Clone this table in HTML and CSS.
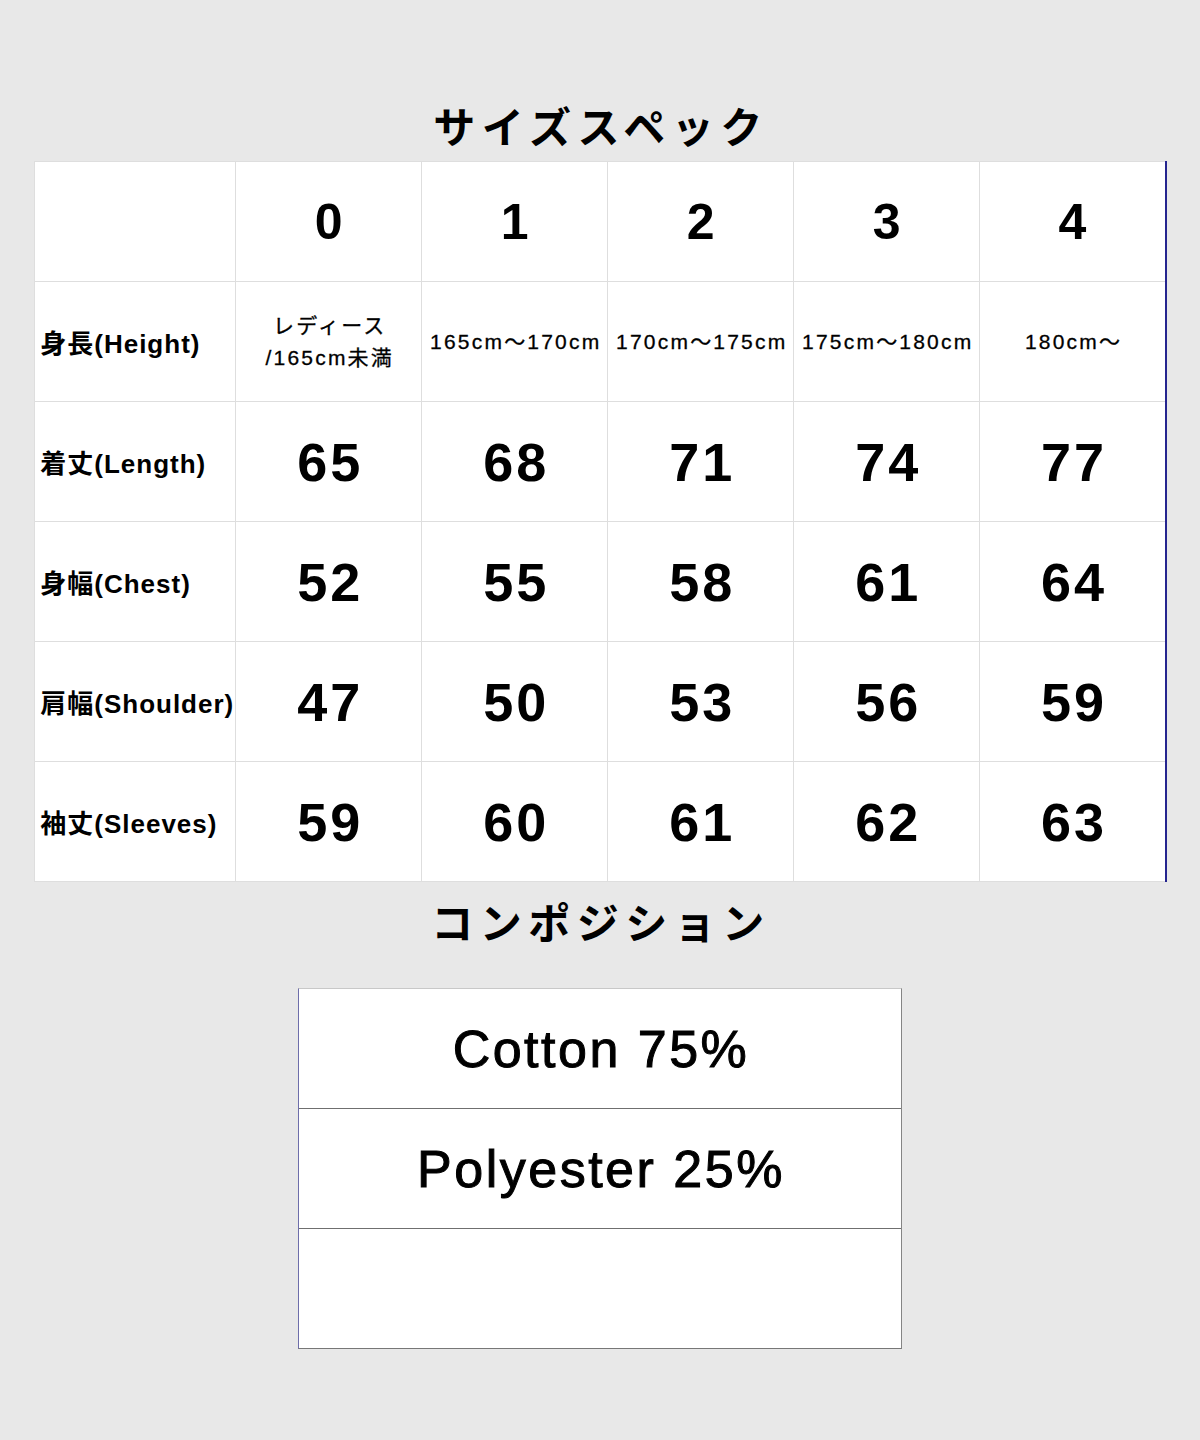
FILE: index.html
```html
<!DOCTYPE html>
<html lang="ja">
<head>
<meta charset="utf-8">
<title>サイズスペック</title>
<link rel="stylesheet" href="styles.css">
</head>
<body>
<main class="page">
  <h2 class="title title-spec">サイズスペック</h2>
  <table class="spec">
    <colgroup>
      <col class="col-label">
      <col class="col-size"><col class="col-size"><col class="col-size"><col class="col-size"><col class="col-size">
    </colgroup>
    <tr class="head">
      <td class="label"></td>
      <td class="num">0</td><td class="num">1</td><td class="num">2</td><td class="num">3</td><td class="num">4</td>
    </tr>
    <tr>
      <td class="label">身長(Height)</td>
      <td class="range">レディース<br>/165cm未満</td>
      <td class="range">165cm～170cm</td>
      <td class="range">170cm～175cm</td>
      <td class="range">175cm～180cm</td>
      <td class="range">180cm～</td>
    </tr>
    <tr>
      <td class="label">着丈(Length)</td>
      <td class="num">65</td><td class="num">68</td><td class="num">71</td><td class="num">74</td><td class="num">77</td>
    </tr>
    <tr>
      <td class="label">身幅(Chest)</td>
      <td class="num">52</td><td class="num">55</td><td class="num">58</td><td class="num">61</td><td class="num">64</td>
    </tr>
    <tr>
      <td class="label">肩幅(Shoulder)</td>
      <td class="num">47</td><td class="num">50</td><td class="num">53</td><td class="num">56</td><td class="num">59</td>
    </tr>
    <tr>
      <td class="label">袖丈(Sleeves)</td>
      <td class="num">59</td><td class="num">60</td><td class="num">61</td><td class="num">62</td><td class="num">63</td>
    </tr>
  </table>

  <h2 class="title title-comp">コンポジション</h2>
  <div class="comp">
    <div class="comp-row">Cotton 75%</div>
    <div class="comp-row">Polyester 25%</div>
    <div class="comp-row"></div>
  </div>
</main>
</body>
</html>
```

FILE: styles.css
```css
html, body {
  margin: 0;
  padding: 0;
  background: #e8e8e8;
}

body {
  font-family: "Liberation Sans", "Noto Sans CJK JP", sans-serif;
  color: #000;
  width: 1200px;
  height: 1440px;
  overflow: hidden;
}

.page {
  display: flex;
  flex-direction: column;
  align-items: center;
  padding-top: 92px;
}

.title {
  margin: 0;
  font-family: "Noto Sans CJK JP", sans-serif;
  font-weight: 700;
  font-size: 42px;
  line-height: 66px;
  height: 66px;
  letter-spacing: 6.5px;
  padding-left: 2px;
  text-align: center;
}

.title-spec {
  margin-bottom: 3px;
}

.title-comp {
  margin-top: 6px;
  margin-bottom: 34px;
}

.spec {
  border-collapse: collapse;
  table-layout: fixed;
  width: 1132px;
  margin-left: 1px;
  background: #fff;
}

.col-label { width: 201px; }
.col-size { width: 186px; }

.spec td {
  border: 1px solid #dedede;
  height: 119px;
  padding: 0;
  text-align: center;
  vertical-align: middle;
}

.spec td:last-child {
  border-right: 2px solid #25258f;
}

.spec td.label {
  text-align: left;
  padding-left: 5px;
  font-family: "Liberation Sans", "Noto Sans CJK JP", sans-serif;
  font-weight: 700;
  font-size: 26px;
  letter-spacing: 1px;
  white-space: nowrap;
}

.spec td.num {
  font-family: "Liberation Sans", sans-serif;
  font-weight: 700;
  font-size: 54px;
  letter-spacing: 3px;
  padding-left: 3px;
}

.spec .head td.num {
  font-size: 50px;
  letter-spacing: 0;
  padding-left: 0;
}

.spec td.range {
  font-family: "Liberation Sans", "Noto Sans CJK JP", sans-serif;
  font-size: 21px;
  line-height: 32px;
  letter-spacing: 2.2px;
  padding-left: 2px;
  -webkit-text-stroke: 0.3px #000;
  white-space: nowrap;
}

.comp {
  width: 602px;
  background: #fff;
  border-top: 1px solid #c8c8c8;
  border-left: 1px solid #6e6eaa;
  border-right: 1px solid #858585;
  border-bottom: 1px solid #777;
  display: flex;
  flex-direction: column;
}

.comp-row {
  height: 119px;
  display: flex;
  align-items: center;
  justify-content: center;
  font-family: "Liberation Sans", sans-serif;
  font-size: 52px;
  letter-spacing: 2.5px;
  padding-left: 2px;
  -webkit-text-stroke: 1px #000;
}

.comp-row + .comp-row {
  border-top: 1px solid #6f6f6f;
}
```
